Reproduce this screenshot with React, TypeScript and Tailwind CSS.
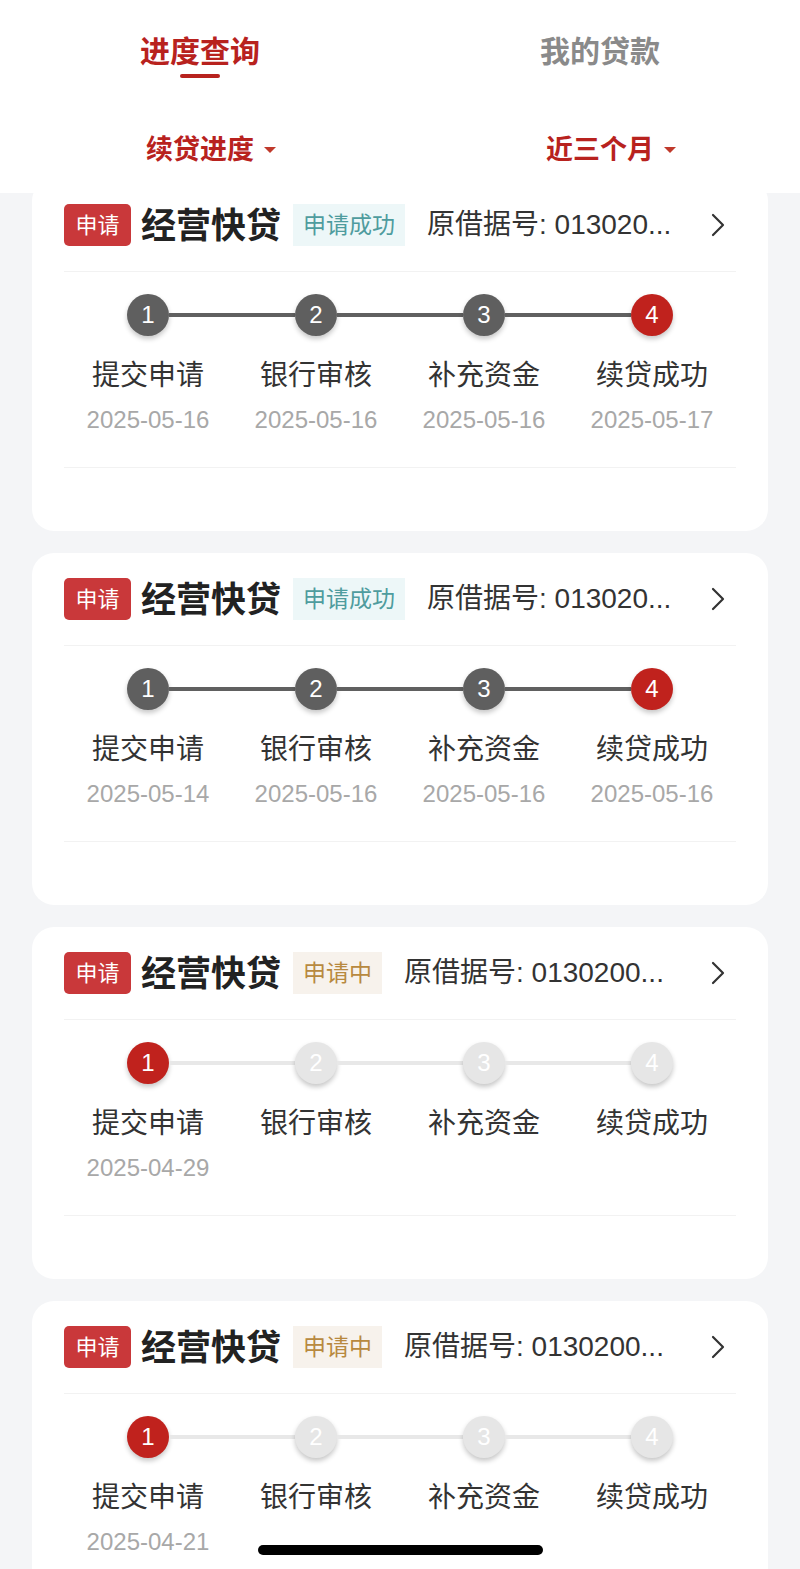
import React from "react";

const FONT = { fontFamily: '"Liberation Sans", "Noto Sans CJK SC", sans-serif' };

const STEPS = ["提交申请", "银行审核", "补充资金", "续贷成功"];

interface LoanCard {
  status: "done" | "pending";
  receipt: string;
  current: number; // index of last reached step
  dates: string[];
}

const CARDS: LoanCard[] = [
  {
    status: "done",
    receipt: "原借据号: 013020...",
    current: 3,
    dates: ["2025-05-16", "2025-05-16", "2025-05-16", "2025-05-17"],
  },
  {
    status: "done",
    receipt: "原借据号: 013020...",
    current: 3,
    dates: ["2025-05-14", "2025-05-16", "2025-05-16", "2025-05-16"],
  },
  {
    status: "pending",
    receipt: "原借据号: 0130200...",
    current: 0,
    dates: ["2025-04-29", "", "", ""],
  },
  {
    status: "pending",
    receipt: "原借据号: 0130200...",
    current: 0,
    dates: ["2025-04-21", "", "", ""],
  },
];

function Caret() {
  return (
    <svg width="14" height="8" viewBox="0 0 14 8" className="ml-[9px]">
      <path d="M1 1 L13 1 L7 7 Z" fill="#c0392b" />
    </svg>
  );
}

function Chevron() {
  return (
    <svg width="16" height="26" viewBox="0 0 16 26" className="mr-[10px] shrink-0">
      <path d="M3 3 L13 13 L3 23" fill="none" stroke="#333" strokeWidth="2.2" strokeLinecap="round" strokeLinejoin="round" />
    </svg>
  );
}

function Step({ index, card }: { index: number; card: LoanCard }) {
  const reached = index <= card.current;
  const isCurrent = index === card.current;
  // segment left of this step is dark when this step is reached
  const leftDark = index <= card.current;
  const rightDark = index + 1 <= card.current;

  const circle = isCurrent
    ? "bg-[#c0221d]"
    : reached
    ? "bg-[#5f5f5f]"
    : "bg-[#e6e6e6]";

  return (
    <div className="flex flex-col items-center">
      <div className="flex h-[42px] w-full items-center">
        <div
          className={`h-[4px] flex-1 ${
            index === 0 ? "bg-transparent" : leftDark ? "bg-[#606060]" : "bg-[#e8e8e8]"
          }`}
        />
        <div
          className={`flex h-[42px] w-[42px] shrink-0 items-center justify-center rounded-full text-[24px] text-white shadow-[0_3px_5px_rgba(0,0,0,0.22)] ${circle}`}
        >
          {index + 1}
        </div>
        <div
          className={`h-[4px] flex-1 ${
            index === 3 ? "bg-transparent" : rightDark ? "bg-[#606060]" : "bg-[#e8e8e8]"
          }`}
        />
      </div>
      <div className="mt-[22px] text-[28px] leading-[36px] text-[#333]">{STEPS[index]}</div>
      <div className="mt-[11px] h-[30px] text-[24px] leading-[30px] text-[#a8a8a8]">
        {card.dates[index]}
      </div>
    </div>
  );
}

function Card({ card, first }: { card: LoanCard; first?: boolean }) {
  const done = card.status === "done";
  return (
    <div
      className={`mx-[32px] h-[352px] shrink-0 rounded-[22px] bg-white px-[32px] pt-[25px] ${
        first ? "-mt-[14px]" : ""
      }`}
    >
      <div className="flex h-[42px] items-center">
        <span className="flex h-[42px] w-[67px] items-center justify-center rounded-[5px] bg-[#c9383a] text-[22px] text-white">
          申请
        </span>
        <span className="ml-[10px] text-[35px] font-bold leading-none text-[#222]">经营快贷</span>
        <span
          className={`ml-[12px] flex h-[42px] items-center px-[10px] text-[23px] ${
            done ? "bg-[#edf7f8] text-[#4f9c9e]" : "bg-[#f7f2ec] text-[#b8893f]"
          }`}
        >
          {done ? "申请成功" : "申请中"}
        </span>
        <span className="ml-[22px] min-w-0 flex-1 whitespace-nowrap text-[28px] text-[#333]">
          {card.receipt}
        </span>
        <Chevron />
      </div>
      <div className="mt-[25px] h-px bg-[#f2f2f2]" />
      <div className="mt-[22px] grid grid-cols-4">
        {STEPS.map((_, i) => (
          <Step key={i} index={i} card={card} />
        ))}
      </div>
      <div className="mt-[32px] h-px bg-[#f2f2f2]" />
    </div>
  );
}

export default function App() {
  return (
    <div className="relative h-[1569px] overflow-hidden bg-[#f4f5f7]" style={FONT}>
      {/* Header */}
      <div className="relative z-10 bg-white pt-[32px] pb-[25px]">
        <div className="flex">
          <div className="flex flex-1 flex-col items-center">
            <span className="text-[30px] font-bold leading-[40px] text-[#b8221e]">进度查询</span>
            <span className="mt-[2px] h-[4px] w-[40px] rounded-full bg-[#b8221e]" />
          </div>
          <div className="flex flex-1 flex-col items-center">
            <span className="text-[30px] font-bold leading-[40px] text-[#8a8a8a]">我的贷款</span>
            <span className="mt-[2px] h-[4px] w-[40px]" />
          </div>
        </div>
        <div className="mt-[54px] flex">
          <div className="flex flex-1 justify-center">
            <div className="flex items-center pl-[23px]">
              <span className="text-[27px] font-bold leading-[36px] text-[#b8221e]">续贷进度</span>
              <Caret />
            </div>
          </div>
          <div className="flex flex-1 justify-center">
            <div className="flex items-center pl-[23px]">
              <span className="text-[27px] font-bold leading-[36px] text-[#b8221e]">近三个月</span>
              <Caret />
            </div>
          </div>
        </div>
      </div>

      {/* List */}
      <div className="flex flex-col gap-[22px]">
        {CARDS.map((c, i) => (
          <Card key={i} card={c} first={i === 0} />
        ))}
      </div>

      {/* Home indicator */}
      <div className="absolute bottom-[14px] left-[258px] h-[10px] w-[285px] rounded-full bg-black" />
    </div>
  );
}
